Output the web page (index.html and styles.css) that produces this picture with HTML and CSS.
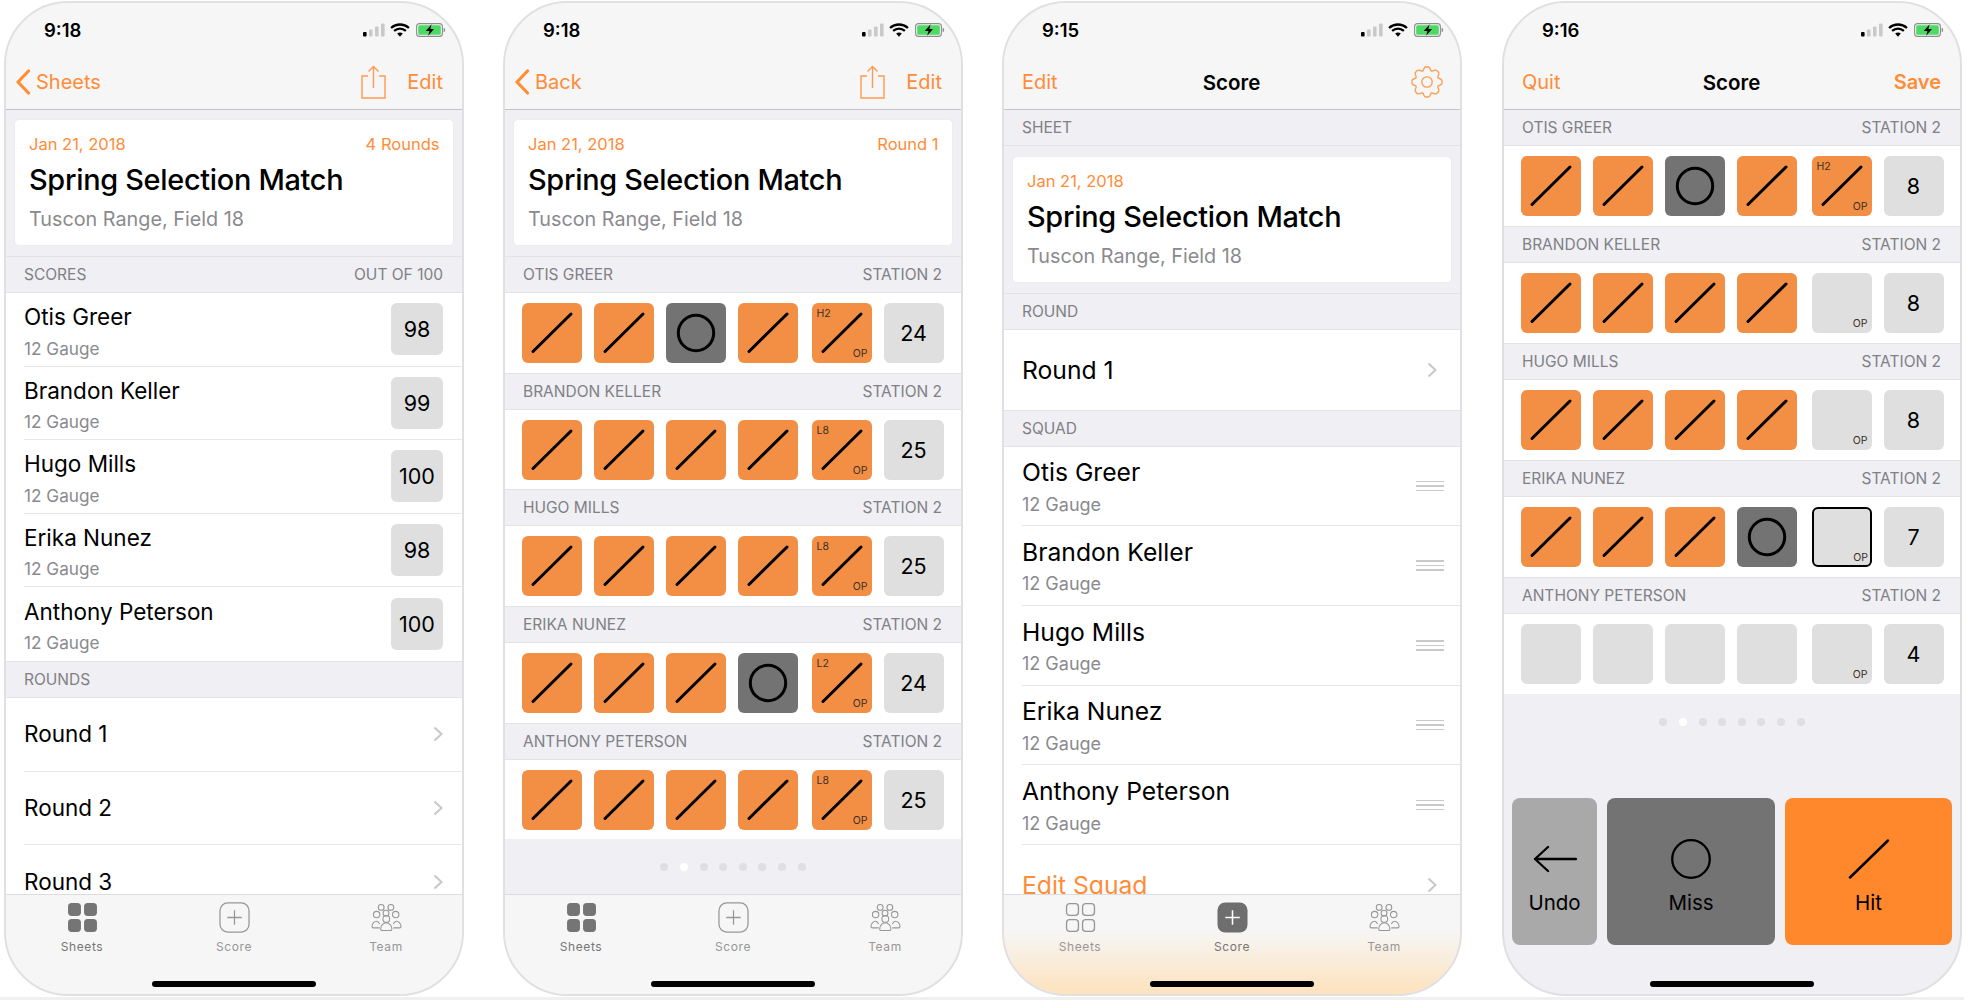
FILE: index.html
```html
<!DOCTYPE html>
<html lang="en">
<head>
  <meta charset="UTF-8" />
  <title>Score sheets</title>
  <link rel="stylesheet" href="styles.css">
</head>
<body>

  <!-- Shared icons -->
  <svg class="icon-defs" xmlns="http://www.w3.org/2000/svg">
    <symbol id="slash" viewBox="0 0 60 60"><path d="M11 48.500 49 11" fill="none" stroke="currentColor" stroke-width="3" stroke-linecap="round"/></symbol>
    <symbol id="ring" viewBox="0 0 60 60"><circle cx="30" cy="30" r="17.700" fill="none" stroke="currentColor" stroke-width="3"/></symbol>
    <symbol id="signal" viewBox="0 0 22 14"><rect x="0" y="9" width="3.600" height="4.600" rx="1" fill="#000"/><rect x="6" y="6.500" width="3.600" height="7" rx="1" fill="#c9c9cb"/><rect x="12" y="3.500" width="3.600" height="10" rx="1" fill="#c9c9cb"/><rect x="18" y="0.500" width="3.600" height="13" rx="1" fill="#c9c9cb"/></symbol>
    <symbol id="wifi" viewBox="0 0 19 13"><path d="M1 4.600C6 .2 13 .2 18 4.600M3.900 7.400c3.400-2.900 7.800-2.900 11.200 0" fill="none" stroke="#000" stroke-width="2.200"/><path d="M6.800 9.900c1.700-1.300 3.700-1.300 5.400 0L9.500 13z" fill="#000"/></symbol>
    <symbol id="battery" viewBox="0 0 30 14"><rect x=".6" y=".6" width="25.800" height="12.800" rx="3" fill="none" stroke="#8d8d8d" stroke-width="1.100"/><rect x="2.200" y="2.200" width="22.600" height="9.600" rx="1.500" fill="#4cd964"/><path d="M27.600 4.800c1 .3 1.600 1.100 1.600 2.200s-.6 1.900-1.600 2.200z" fill="#8d8d8d"/><path d="M15.600 1.200 9.800 8h3.600l-1.200 4.800L18 6h-3.600z" fill="#000"/></symbol>
    <symbol id="back" viewBox="0 0 16 26"><path d="M13.500 2 3 13l10.500 11" fill="none" stroke="currentColor" stroke-width="3.200" stroke-linecap="round" stroke-linejoin="round"/></symbol>
    <symbol id="share" viewBox="0 0 25 34"><path d="M7 11H1v22h23V11h-6M12.500 23V1.500M7.500 6.500l5-5 5 5" fill="none" stroke="currentColor" stroke-width="1.400"/></symbol>
    <symbol id="chevron" viewBox="0 0 10 16"><path d="M1.500 1.500 8.500 8l-7 6.500" fill="none" stroke="#c7c7cc" stroke-width="2"/></symbol>
    <symbol id="sheets-solid" viewBox="0 0 30 30"><rect x="1" y="1" width="12.500" height="12.500" rx="3.500"/><rect x="16.500" y="1" width="12.500" height="12.500" rx="3.500"/><rect x="1" y="16.500" width="12.500" height="12.500" rx="3.500"/><rect x="16.500" y="16.500" width="12.500" height="12.500" rx="3.500"/></symbol>
    <symbol id="sheets-line" viewBox="0 0 30 30"><g fill="none" stroke="currentColor" stroke-width="1.300"><rect x="1.500" y="1.500" width="11.500" height="11.500" rx="3"/><rect x="17" y="1.500" width="11.500" height="11.500" rx="3"/><rect x="1.500" y="17" width="11.500" height="11.500" rx="3"/><rect x="17" y="17" width="11.500" height="11.500" rx="3"/></g></symbol>
    <symbol id="score-line" viewBox="0 0 32 32"><rect x="1" y="1" width="30" height="30" rx="8" fill="none" stroke="currentColor" stroke-width="1.300"/><path d="M16 8.500v15M8.500 16h15" stroke="currentColor" stroke-width="1.300"/></symbol>
    <symbol id="score-solid" viewBox="0 0 32 32"><rect x=".5" y=".5" width="31" height="31" rx="8" fill="#6e6e6e"/><path d="M16 8.500v15M8.500 16h15" stroke="#fff" stroke-width="1.600"/></symbol>
    <symbol id="team" viewBox="0 0 32 28"><g fill="none" stroke="currentColor" stroke-width="1.100"><circle cx="10.500" cy="3.600" r="3"/><circle cx="20.500" cy="3.600" r="3"/><circle cx="15.500" cy="9.500" r="3"/><circle cx="5.800" cy="11" r="3.300"/><circle cx="25.500" cy="11" r="3.300"/><path d="M9 20.800c-1-1.800-2-3-3.200-3-2.500 0-4.800 2.700-4.800 5.500 0 1 .6 1.400 1.500 1.400H9"/><path d="M23 20.800c1-1.800 2-3 3.200-3 2.500 0 4.800 2.700 4.800 5.500 0 1-.6 1.400-1.500 1.400H23"/><circle cx="15.800" cy="15.500" r="3.500"/><path d="M10 25.800c0-3.400 2.700-6.300 5.800-6.300s5.800 2.900 5.800 6.300c0 1-.6 1.700-1.600 1.700h-8.400c-1 0-1.600-.7-1.600-1.700z" fill="#f6f6f6"/></g></symbol>
  </svg>

  <div class="screens">

    <!-- Sheet detail -->
    <section class="phone">
      <header class="top">
        <div class="status">
          <span class="time">9:18</span>
          <span class="status-icons">
            <svg class="ic-signal"><use href="#signal"/></svg>
            <svg class="ic-wifi"><use href="#wifi"/></svg>
            <svg class="ic-battery"><use href="#battery"/></svg>
          </span>
        </div>
        <nav class="nav">
          <a class="nav-link back"><svg class="ic-back"><use href="#back"/></svg>Sheets</a>
          <span class="nav-actions"><svg class="ic-share"><use href="#share"/></svg><a class="nav-link">Edit</a></span>
        </nav>
      </header>
      <main class="content">
        <div class="card-wrap">
          <div class="card">
            <div class="card-meta"><span>Jan 21, 2018</span><span>4 Rounds</span></div>
            <div class="card-title">Spring Selection Match</div>
            <div class="card-sub">Tuscon Range, Field 18</div>
          </div>
        </div>
        <div class="sec-head"><span>Scores</span><span>Out of 100</span></div>
        <div class="list">
          <div class="row"><div><div class="name">Otis Greer</div><div class="gauge">12 Gauge</div></div><div class="score-box">98</div></div>
          <div class="row"><div><div class="name">Brandon Keller</div><div class="gauge">12 Gauge</div></div><div class="score-box">99</div></div>
          <div class="row"><div><div class="name">Hugo Mills</div><div class="gauge">12 Gauge</div></div><div class="score-box">100</div></div>
          <div class="row"><div><div class="name">Erika Nunez</div><div class="gauge">12 Gauge</div></div><div class="score-box">98</div></div>
          <div class="row"><div><div class="name">Anthony Peterson</div><div class="gauge">12 Gauge</div></div><div class="score-box">100</div></div>
        </div>
        <div class="sec-head"><span>Rounds</span></div>
        <div class="list">
          <div class="row"><div class="name">Round 1</div><svg class="ic-chevron"><use href="#chevron"/></svg></div>
          <div class="row"><div class="name">Round 2</div><svg class="ic-chevron"><use href="#chevron"/></svg></div>
          <div class="row"><div class="name">Round 3</div><svg class="ic-chevron"><use href="#chevron"/></svg></div>
        </div>
      </main>
      <footer class="tabs">
        <div class="tab active"><svg class="tab-icon"><use href="#sheets-solid"/></svg>Sheets</div>
        <div class="tab"><svg class="tab-icon"><use href="#score-line"/></svg>Score</div>
        <div class="tab"><svg class="tab-icon"><use href="#team"/></svg>Team</div>
      </footer>
      <div class="home-bar"></div>
    </section>

    <!-- Round scorecard -->
    <section class="phone">
      <header class="top">
        <div class="status">
          <span class="time">9:18</span>
          <span class="status-icons">
            <svg class="ic-signal"><use href="#signal"/></svg>
            <svg class="ic-wifi"><use href="#wifi"/></svg>
            <svg class="ic-battery"><use href="#battery"/></svg>
          </span>
        </div>
        <nav class="nav">
          <a class="nav-link back"><svg class="ic-back"><use href="#back"/></svg>Back</a>
          <span class="nav-actions"><svg class="ic-share"><use href="#share"/></svg><a class="nav-link">Edit</a></span>
        </nav>
      </header>
      <main class="content">
        <div class="card-wrap">
          <div class="card">
            <div class="card-meta"><span>Jan 21, 2018</span><span>Round 1</span></div>
            <div class="card-title">Spring Selection Match</div>
            <div class="card-sub">Tuscon Range, Field 18</div>
          </div>
        </div>
        <div class="sec-head"><span>Otis Greer</span><span>Station 2</span></div>
        <div class="tiles">
          <div class="tile hit"><svg class="mark"><use href="#slash"/></svg></div>
          <div class="tile hit"><svg class="mark"><use href="#slash"/></svg></div>
          <div class="tile miss"><svg class="mark"><use href="#ring"/></svg></div>
          <div class="tile hit"><svg class="mark"><use href="#slash"/></svg></div>
          <div class="tile hit option"><svg class="mark"><use href="#slash"/></svg><span class="tag-tl">H2</span><span class="tag-br">OP</span></div>
          <div class="tile total">24</div>
        </div>
        <div class="sec-head"><span>Brandon Keller</span><span>Station 2</span></div>
        <div class="tiles">
          <div class="tile hit"><svg class="mark"><use href="#slash"/></svg></div>
          <div class="tile hit"><svg class="mark"><use href="#slash"/></svg></div>
          <div class="tile hit"><svg class="mark"><use href="#slash"/></svg></div>
          <div class="tile hit"><svg class="mark"><use href="#slash"/></svg></div>
          <div class="tile hit option"><svg class="mark"><use href="#slash"/></svg><span class="tag-tl">L8</span><span class="tag-br">OP</span></div>
          <div class="tile total">25</div>
        </div>
        <div class="sec-head"><span>Hugo Mills</span><span>Station 2</span></div>
        <div class="tiles">
          <div class="tile hit"><svg class="mark"><use href="#slash"/></svg></div>
          <div class="tile hit"><svg class="mark"><use href="#slash"/></svg></div>
          <div class="tile hit"><svg class="mark"><use href="#slash"/></svg></div>
          <div class="tile hit"><svg class="mark"><use href="#slash"/></svg></div>
          <div class="tile hit option"><svg class="mark"><use href="#slash"/></svg><span class="tag-tl">L8</span><span class="tag-br">OP</span></div>
          <div class="tile total">25</div>
        </div>
        <div class="sec-head"><span>Erika Nunez</span><span>Station 2</span></div>
        <div class="tiles">
          <div class="tile hit"><svg class="mark"><use href="#slash"/></svg></div>
          <div class="tile hit"><svg class="mark"><use href="#slash"/></svg></div>
          <div class="tile hit"><svg class="mark"><use href="#slash"/></svg></div>
          <div class="tile miss"><svg class="mark"><use href="#ring"/></svg></div>
          <div class="tile hit option"><svg class="mark"><use href="#slash"/></svg><span class="tag-tl">L2</span><span class="tag-br">OP</span></div>
          <div class="tile total">24</div>
        </div>
        <div class="sec-head"><span>Anthony Peterson</span><span>Station 2</span></div>
        <div class="tiles">
          <div class="tile hit"><svg class="mark"><use href="#slash"/></svg></div>
          <div class="tile hit"><svg class="mark"><use href="#slash"/></svg></div>
          <div class="tile hit"><svg class="mark"><use href="#slash"/></svg></div>
          <div class="tile hit"><svg class="mark"><use href="#slash"/></svg></div>
          <div class="tile hit option"><svg class="mark"><use href="#slash"/></svg><span class="tag-tl">L8</span><span class="tag-br">OP</span></div>
          <div class="tile total">25</div>
        </div>
        <div class="dots"><i></i><i class="on"></i><i></i><i></i><i></i><i></i><i></i><i></i></div>
      </main>
      <footer class="tabs">
        <div class="tab active"><svg class="tab-icon"><use href="#sheets-solid"/></svg>Sheets</div>
        <div class="tab"><svg class="tab-icon"><use href="#score-line"/></svg>Score</div>
        <div class="tab"><svg class="tab-icon"><use href="#team"/></svg>Team</div>
      </footer>
      <div class="home-bar"></div>
    </section>

    <!-- Score setup -->
    <section class="phone">
      <header class="top">
        <div class="status">
          <span class="time">9:15</span>
          <span class="status-icons">
            <svg class="ic-signal"><use href="#signal"/></svg>
            <svg class="ic-wifi"><use href="#wifi"/></svg>
            <svg class="ic-battery"><use href="#battery"/></svg>
          </span>
        </div>
        <nav class="nav">
          <a class="nav-link nav-side">Edit</a>
          <span class="nav-title">Score</span>
          <span class="nav-side nav-end">
            <svg class="ic-gear" viewBox="-16 -16 32 32">
              <g fill="none" stroke="#ff9a4f" stroke-width="1.300" stroke-linejoin="round">
                <path id="tooth" d="M10.600-4.400 14-2.700Q15-2.200 15-1.200V1.200Q15 2.200 14 2.700L10.600 4.400"/>
                <use href="#tooth" transform="rotate(45)"/>
                <use href="#tooth" transform="rotate(90)"/>
                <use href="#tooth" transform="rotate(135)"/>
                <use href="#tooth" transform="rotate(180)"/>
                <use href="#tooth" transform="rotate(225)"/>
                <use href="#tooth" transform="rotate(270)"/>
                <use href="#tooth" transform="rotate(315)"/>
                <circle r="5.200"/>
              </g>
            </svg>
          </span>
        </nav>
      </header>
      <main class="content">
        <div class="sec-head first"><span>Sheet</span></div>
        <div class="card-wrap">
          <div class="card">
            <div class="card-meta"><span>Jan 21, 2018</span></div>
            <div class="card-title">Spring Selection Match</div>
            <div class="card-sub">Tuscon Range, Field 18</div>
          </div>
        </div>
        <div class="sec-head"><span>Round</span></div>
        <div class="list large">
          <div class="row"><div class="name">Round 1</div><svg class="ic-chevron"><use href="#chevron"/></svg></div>
        </div>
        <div class="sec-head"><span>Squad</span></div>
        <div class="list large">
          <div class="row"><div><div class="name">Otis Greer</div><div class="gauge">12 Gauge</div></div><div class="grip"><i></i><i></i><i></i></div></div>
          <div class="row"><div><div class="name">Brandon Keller</div><div class="gauge">12 Gauge</div></div><div class="grip"><i></i><i></i><i></i></div></div>
          <div class="row"><div><div class="name">Hugo Mills</div><div class="gauge">12 Gauge</div></div><div class="grip"><i></i><i></i><i></i></div></div>
          <div class="row"><div><div class="name">Erika Nunez</div><div class="gauge">12 Gauge</div></div><div class="grip"><i></i><i></i><i></i></div></div>
          <div class="row"><div><div class="name">Anthony Peterson</div><div class="gauge">12 Gauge</div></div><div class="grip"><i></i><i></i><i></i></div></div>
          <div class="row"><div class="name accent">Edit Squad</div><svg class="ic-chevron"><use href="#chevron"/></svg></div>
        </div>
      </main>
      <footer class="tabs warm">
        <div class="tab"><svg class="tab-icon"><use href="#sheets-line"/></svg>Sheets</div>
        <div class="tab active"><svg class="tab-icon"><use href="#score-solid"/></svg>Score</div>
        <div class="tab"><svg class="tab-icon"><use href="#team"/></svg>Team</div>
      </footer>
      <div class="home-bar"></div>
    </section>

    <!-- Live scoring -->
    <section class="phone">
      <header class="top">
        <div class="status">
          <span class="time">9:16</span>
          <span class="status-icons">
            <svg class="ic-signal"><use href="#signal"/></svg>
            <svg class="ic-wifi"><use href="#wifi"/></svg>
            <svg class="ic-battery"><use href="#battery"/></svg>
          </span>
        </div>
        <nav class="nav">
          <a class="nav-link nav-side">Quit</a>
          <span class="nav-title">Score</span>
          <span class="nav-side nav-end"><a class="nav-link strong">Save</a></span>
        </nav>
      </header>
      <main class="content live">
        <div class="sec-head first"><span>Otis Greer</span><span>Station 2</span></div>
        <div class="tiles">
          <div class="tile hit"><svg class="mark"><use href="#slash"/></svg></div>
          <div class="tile hit"><svg class="mark"><use href="#slash"/></svg></div>
          <div class="tile miss"><svg class="mark"><use href="#ring"/></svg></div>
          <div class="tile hit"><svg class="mark"><use href="#slash"/></svg></div>
          <div class="tile hit option"><svg class="mark"><use href="#slash"/></svg><span class="tag-tl">H2</span><span class="tag-br">OP</span></div>
          <div class="tile total">8</div>
        </div>
        <div class="sec-head"><span>Brandon Keller</span><span>Station 2</span></div>
        <div class="tiles">
          <div class="tile hit"><svg class="mark"><use href="#slash"/></svg></div>
          <div class="tile hit"><svg class="mark"><use href="#slash"/></svg></div>
          <div class="tile hit"><svg class="mark"><use href="#slash"/></svg></div>
          <div class="tile hit"><svg class="mark"><use href="#slash"/></svg></div>
          <div class="tile empty option"><span class="tag-br">OP</span></div>
          <div class="tile total">8</div>
        </div>
        <div class="sec-head"><span>Hugo Mills</span><span>Station 2</span></div>
        <div class="tiles">
          <div class="tile hit"><svg class="mark"><use href="#slash"/></svg></div>
          <div class="tile hit"><svg class="mark"><use href="#slash"/></svg></div>
          <div class="tile hit"><svg class="mark"><use href="#slash"/></svg></div>
          <div class="tile hit"><svg class="mark"><use href="#slash"/></svg></div>
          <div class="tile empty option"><span class="tag-br">OP</span></div>
          <div class="tile total">8</div>
        </div>
        <div class="sec-head"><span>Erika Nunez</span><span>Station 2</span></div>
        <div class="tiles">
          <div class="tile hit"><svg class="mark"><use href="#slash"/></svg></div>
          <div class="tile hit"><svg class="mark"><use href="#slash"/></svg></div>
          <div class="tile hit"><svg class="mark"><use href="#slash"/></svg></div>
          <div class="tile miss"><svg class="mark"><use href="#ring"/></svg></div>
          <div class="tile empty option current"><span class="tag-br">OP</span></div>
          <div class="tile total">7</div>
        </div>
        <div class="sec-head"><span>Anthony Peterson</span><span>Station 2</span></div>
        <div class="tiles">
          <div class="tile empty"></div>
          <div class="tile empty"></div>
          <div class="tile empty"></div>
          <div class="tile empty"></div>
          <div class="tile empty option"><span class="tag-br">OP</span></div>
          <div class="tile total">4</div>
        </div>
        <div class="dots"><i></i><i class="on"></i><i></i><i></i><i></i><i></i><i></i><i></i></div>
        <div class="controls">
          <button class="control undo">
            <svg class="control-icon" viewBox="0 0 44 40"><path d="M43 20H2M15 8 2 20l13 12" fill="none" stroke="#000" stroke-width="2.300" stroke-linecap="round" stroke-linejoin="round"/></svg>
            Undo
          </button>
          <button class="control missed">
            <svg class="control-icon" viewBox="0 0 44 40"><circle cx="22" cy="20" r="18.800" fill="none" stroke="#000" stroke-width="2.300"/></svg>
            Miss
          </button>
          <button class="control scored">
            <svg class="control-icon" viewBox="0 0 44 40"><path d="M3 38.500 41 1.500" fill="none" stroke="#000" stroke-width="2.500" stroke-linecap="round"/></svg>
            Hit
          </button>
        </div>
      </main>
      <div class="home-bar"></div>
    </section>

  </div>
  <div class="strip"></div>

</body>
</html>
```

FILE: styles.css
```css
/* Reset */
* {
  margin: 0;
  padding: 0;
  box-sizing: border-box;
}

html, body {
  height: 1000px;
  overflow: hidden;
}

body {
  font-family: Inter, "Noto Sans", sans-serif;
  background: #fff;
  color: #000;
}

.icon-defs {
  display: none;
}

.screens {
  display: flex;
  gap: 39px;
  height: 997px;
  padding: 1px 0 1px 4px;
}

.strip {
  width: 1964px;
  height: 3px;
  background: #f0f0f0;
}

/* Phone frame */
.phone {
  position: relative;
  display: flex;
  flex-direction: column;
  width: 460px;
  height: 995px;
  border: 2px solid #e0e0e2;
  border-radius: 64px;
  background: #efeff4;
  overflow: hidden;
}

.phone:last-child {
  margin-left: 1px;
}

.home-bar {
  position: absolute;
  left: 146px;
  bottom: 7px;
  width: 164px;
  height: 6px;
  border-radius: 3px;
  background: #000;
}

/* Status and nav */
.top {
  flex: none;
  height: 107px;
  background: #f6f6f6;
  border-bottom: 1px solid #c4c4c6;
}

.status {
  display: flex;
  justify-content: space-between;
  align-items: center;
  height: 54px;
  padding: 0 16px 0 38px;
}

.time {
  font-size: 18.5px;
  font-weight: 600;
}

.status-icons {
  display: flex;
  align-items: center;
}

.ic-signal { width: 22px; height: 14px; margin-right: 5px; }
.ic-wifi { width: 20px; height: 14px; margin-right: 6px; }
.ic-battery { width: 30px; height: 14px; }

.nav {
  display: flex;
  justify-content: space-between;
  align-items: center;
  height: 50px;
  padding: 0 19px 0 18px;
}

.nav-link {
  font-size: 20px;
  color: #ff8c37;
}

.nav-link.strong {
  font-weight: 600;
}

.back {
  display: flex;
  align-items: center;
  gap: 5px;
  margin-left: -9px;
}

.ic-back {
  width: 16px;
  height: 26px;
  color: #ff8c37;
}

.nav-actions {
  display: flex;
  align-items: center;
  gap: 21px;
}

.ic-share {
  width: 25px;
  height: 34px;
  color: #ff9a4f;
}

.nav-side {
  flex: 1;
}

.nav-end {
  display: flex;
  justify-content: flex-end;
}

.nav-title {
  font-size: 20.5px;
  font-weight: 600;
}

.ic-gear {
  width: 32px;
  height: 32px;
  margin-right: -2px;
}

/* Content */
.content {
  flex: 1;
  min-height: 0;
  overflow: hidden;
}

.content.live {
  display: flex;
  flex-direction: column;
}

.card-wrap {
  padding: 10px 9px 11px;
}

.sec-head.first + .card-wrap {
  padding-top: 11px;
}

.card {
  height: 125px;
  padding: 13px 13.5px 0 14px;
  border-radius: 4px;
  background: #fff;
  box-shadow: 0 0 2px rgba(0, 0, 0, 0.06);
}

.card-meta {
  display: flex;
  justify-content: space-between;
  font-size: 16.5px;
  line-height: 22px;
  color: #ff8c37;
}

.card-title {
  margin-top: 7px;
  font-size: 28.9px;
  font-weight: 500;
  line-height: 36px;
  letter-spacing: -0.3px;
}

.card-sub {
  margin-top: 8px;
  font-size: 19.8px;
  line-height: 26px;
  color: #8a8a8e;
}

.sec-head {
  flex: none;
  display: flex;
  justify-content: space-between;
  align-items: center;
  height: 37px;
  padding: 0 19px 0 18px;
  border-top: 1px solid #e3e3e7;
  border-bottom: 1px solid #e3e3e7;
  font-size: 15.5px;
  text-transform: uppercase;
  color: #808085;
}

.sec-head.first {
  height: 36px;
  border-top: none;
}

/* Lists */
.list {
  background: #fff;
}

.row {
  display: flex;
  justify-content: space-between;
  align-items: center;
  height: 73.6px;
  margin-left: 18px;
  padding-right: 19px;
  border-bottom: 1px solid #e6e6e9;
}

.list .row:last-child {
  border-bottom: none;
}

.name {
  font-size: 22.5px;
  line-height: 28px;
}

.gauge {
  margin-top: 6.5px;
  margin-bottom: -3px;
  font-size: 17.2px;
  line-height: 21px;
  color: #8a8a8e;
}

.score-box {
  display: flex;
  justify-content: center;
  align-items: center;
  width: 52px;
  height: 52px;
  border-radius: 6px;
  background: #dfdfdf;
  font-size: 21.5px;
}

.ic-chevron {
  width: 10px;
  height: 16px;
}

.list.large .row {
  height: 79.7px;
  padding-right: 16px;
}

.list.large .name {
  font-size: 24.7px;
  line-height: 30px;
}

.list.large .gauge {
  margin-top: 6.5px;
  margin-bottom: 0;
  font-size: 18px;
}

.list.large .ic-chevron {
  margin-right: 7px;
}

.accent {
  color: #ff8c37;
}

.grip {
  display: flex;
  flex-direction: column;
  gap: 3px;
  width: 28px;
}

.grip i {
  display: block;
  height: 1.5px;
  background: #c9c9cc;
}

/* Score tiles */
.tiles {
  flex: none;
  display: flex;
  gap: 12px;
  height: 79.7px;
  padding: 10px 0 0 17px;
  background: #fff;
}

.content.live .tiles {
  height: 80px;
}

.tile {
  position: relative;
  display: flex;
  justify-content: center;
  align-items: center;
  width: 60px;
  height: 60px;
  border-radius: 6px;
}

.tile.option {
  margin-left: 1.5px;
}

.content.live .tile.option {
  margin-left: 2.5px;
}

.hit {
  background: #f28f45;
}

.miss {
  background: #737373;
}

.empty, .total {
  background: #dfdfdf;
}

.total {
  font-size: 21.5px;
}

.current {
  border: 2.500px solid #000;
}

.mark {
  width: 60px;
  height: 60px;
  color: #000;
}

.tag-tl, .tag-br {
  position: absolute;
  font-size: 10.5px;
  line-height: 12px;
  color: #3b3026;
}

.tag-tl {
  top: 5px;
  left: 5px;
}

.tag-br {
  right: 4px;
  bottom: 3px;
}

.current .tag-br {
  right: 1.500px;
  bottom: 1px;
}

.dots {
  flex: none;
  display: flex;
  justify-content: center;
  gap: 11.600px;
  margin-top: 24px;
}

.dots i {
  display: block;
  width: 8px;
  height: 8px;
  border-radius: 50%;
  background: #dfdfe3;
}

.dots i.on {
  background: #fff;
}

/* Big scoring buttons */
.controls {
  display: flex;
  gap: 10px;
  height: 147px;
  margin-top: auto;
  margin-bottom: 49px;
  padding: 0 8px;
}

.control {
  flex: 1;
  display: flex;
  flex-direction: column;
  align-items: center;
  padding-top: 41px;
  border: none;
  border-radius: 8px;
  font-family: inherit;
  font-size: 20.5px;
  line-height: 26px;
  color: #000;
}

.control-icon {
  width: 44px;
  height: 40px;
  margin-bottom: 11px;
}

.undo {
  flex: none;
  width: 85px;
  background: #a9a9a9;
}

.missed {
  flex: none;
  width: 168px;
  background: #747374;
}

.scored {
  background: #ff872c;
}

/* Tab bar */
.tabs {
  flex: none;
  display: flex;
  height: 100px;
  padding-top: 7px;
  background: #f6f6f6;
  border-top: 1px solid #dcdcde;
}

.tabs.warm {
  background: linear-gradient(#f6f6f6 35%, #fde2bd 100%);
}

.tab {
  flex: 1;
  display: flex;
  flex-direction: column;
  align-items: center;
  font-size: 12px;
  line-height: 16px;
  letter-spacing: 0.6px;
  color: #979797;
}

.tab.active {
  color: #757575;
}

.tab-icon {
  width: 31px;
  height: 31px;
  margin-bottom: 6px;
  color: #757575;
  fill: #757575;
}

.tab:not(.active) .tab-icon {
  color: #979797;
  fill: none;
}
```
